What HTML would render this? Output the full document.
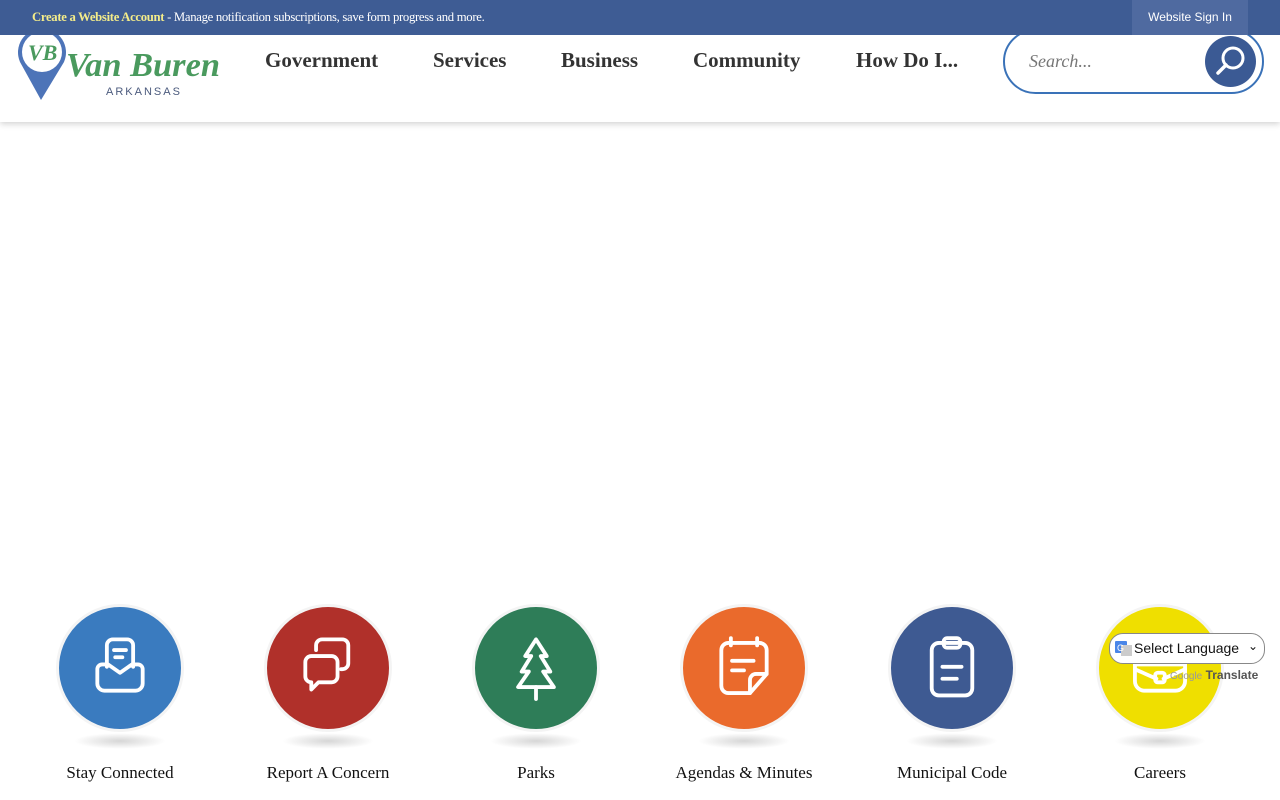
<!DOCTYPE html>
<html><head><style>
*{margin:0;padding:0;box-sizing:border-box}
body{width:1280px;height:800px;background:#fff;position:relative;overflow:hidden;font-family:"Liberation Serif",serif}
.top{position:absolute;left:0;top:0;width:1280px;height:35px;background:#3e5c94;z-index:3}
.top .msg{position:absolute;left:32px;top:10px;font-size:12.7px;color:#fff;letter-spacing:-0.3px}
.top .msg b{color:#f4ec8a}
.top .sign{position:absolute;left:1132px;top:0;width:116px;height:35px;background:#4f6aa0;color:#fff;font-family:"Liberation Sans",sans-serif;font-size:12px;text-align:center;line-height:35px}
.hdr{position:absolute;left:0;top:0;width:1280px;height:122px;background:#fff;box-shadow:0 2px 6px rgba(0,0,0,.18);z-index:2}
.nav{position:absolute;top:48px;font-size:21px;font-weight:bold;color:#333}
.search{position:absolute;left:1003px;top:29px;width:261px;height:65px;border:2px solid #3a72b8;border-radius:33px;z-index:2}
.search span{position:absolute;left:24px;top:20px;font-style:italic;color:#777;font-size:18px}
.sbtn{position:absolute;left:1205px;top:36px;width:51px;height:51px;border-radius:50%;background:#3b5a94;z-index:3}
.item{position:absolute;top:604px;width:200px;text-align:center}
.circ{width:128px;height:128px;margin:0 auto;border-radius:50%;border:3px solid #f4f4f4;position:relative}
.circ svg{position:absolute;left:24px;top:24px}
.shadow{width:92px;height:16px;margin:1px auto 0;border-radius:50%;background:radial-gradient(ellipse,rgba(0,0,0,.16),rgba(0,0,0,0) 70%)}
.lbl{margin-top:14px;font-size:17px;color:#111}
.gt{position:absolute;left:1109px;top:633px;width:156px;height:31px;border:1px solid #888;border-radius:14px;background:#fff;font-family:"Liberation Sans",sans-serif;font-size:14px;color:#111;z-index:4}
.gt2{position:absolute;left:1170px;top:668px;font-family:"Liberation Sans",sans-serif;font-size:12px;font-weight:bold;color:#555;z-index:4}
</style></head><body>
<div class="top"><div class="msg"><b>Create a Website Account</b> - Manage notification subscriptions, save form progress and more.</div><div class="sign">Website Sign In</div></div>
<div class="hdr">
<svg style="position:absolute;left:14px;top:22px" width="215" height="80" viewBox="0 0 215 80">
<path d="M27 78 L6 40 A24 24 0 1 1 50 40 Z" fill="#4d74b8"/>
<circle cx="28" cy="30" r="20" fill="#fff"/>
<text x="14" y="38" font-family="Liberation Serif" font-style="italic" font-weight="bold" font-size="22" fill="#4a9a5e">VB</text>
<text x="52" y="54" font-family="Liberation Serif" font-style="italic" font-weight="bold" font-size="34" fill="#4a9a5e" textLength="154" lengthAdjust="spacingAndGlyphs">Van Buren</text>
<text x="92" y="73" font-family="Liberation Sans" font-size="11" letter-spacing="2" fill="#4b5a7d">ARKANSAS</text>
</svg>
<div class="nav" style="left:265px">Government</div>
<div class="nav" style="left:433px">Services</div>
<div class="nav" style="left:561px">Business</div>
<div class="nav" style="left:693px">Community</div>
<div class="nav" style="left:856px">How Do I...</div>
</div>
<div class="search"><span>Search...</span></div>
<div class="sbtn"><svg width="51" height="51" viewBox="0 0 51 51"><circle cx="28" cy="22" r="10" fill="none" stroke="#fff" stroke-width="3"/><path d="M21 29 L13 37" stroke="#fff" stroke-width="3.5" stroke-linecap="round"/></svg></div>

<div class="item" style="left:20px"><div class="circ" style="background:#3a7bbf"><svg width="74" height="74" viewBox="0 0 62 62" fill="none" stroke="#fff" stroke-width="3.2" stroke-linecap="round" stroke-linejoin="round"><path d="M20 30 V12 a5 5 0 0 1 5-5 h12 a5 5 0 0 1 5 5 V30"/><path d="M26 16h10M27 22h6"/><path d="M12 32 a4 4 0 0 1 4-4 h5 l10 7 l10-7 h5 a4 4 0 0 1 4 4 v12 a6 6 0 0 1-6 6 H18 a6 6 0 0 1-6-6z"/></svg></div><div class="shadow"></div><div class="lbl">Stay Connected</div></div>
<div class="item" style="left:228px"><div class="circ" style="background:#b0302a"><svg width="74" height="74" viewBox="0 0 62 62" fill="none" stroke="#fff" stroke-width="3.2" stroke-linecap="round" stroke-linejoin="round"><path d="M21 16 V12 a5 5 0 0 1 5-5 h17 a5 5 0 0 1 5 5 v15 a5 5 0 0 1-5 5 h-1"/><path d="M12 26 a5 5 0 0 1 5-5 h17 a5 5 0 0 1 5 5 v12 a5 5 0 0 1-5 5 H23 l-6 6 v-6 a5 5 0 0 1-5-5z"/></svg></div><div class="shadow"></div><div class="lbl">Report A Concern</div></div>
<div class="item" style="left:436px"><div class="circ" style="background:#2e7d58"><svg width="74" height="74" viewBox="0 0 62 62" fill="none" stroke="#fff" stroke-width="3.2" stroke-linecap="round" stroke-linejoin="round"><path d="M31 7 L22 21 h5 l-8 13 h6 l-9 13 h30 l-9-13 h6 l-8-13 h5z"/><path d="M31 47 v10"/></svg></div><div class="shadow"></div><div class="lbl">Parks</div></div>
<div class="item" style="left:644px"><div class="circ" style="background:#ea6a2c"><svg width="74" height="74" viewBox="0 0 62 62" fill="none" stroke="#fff" stroke-width="3.2" stroke-linecap="round" stroke-linejoin="round"><path d="M20 6v6M42 6v6"/><path d="M50 36 V16 a6 6 0 0 0-6-6 H18 a6 6 0 0 0-6 6 v30 a6 6 0 0 0 6 6 h18 z"/><path d="M50 36 h-9 a5 5 0 0 0-5 5 v11"/><path d="M21 25h18M21 33h10"/></svg></div><div class="shadow"></div><div class="lbl">Agendas &amp; Minutes</div></div>
<div class="item" style="left:852px"><div class="circ" style="background:#3e5a92"><svg width="74" height="74" viewBox="0 0 62 62" fill="none" stroke="#fff" stroke-width="3.2" stroke-linecap="round" stroke-linejoin="round"><rect x="14" y="10" width="34" height="44" rx="6"/><rect x="24" y="6" width="14" height="8" rx="3"/><path d="M23 30h16M23 40h12"/></svg></div><div class="shadow"></div><div class="lbl">Municipal Code</div></div>
<div class="item" style="left:1060px"><div class="circ" style="background:#efdf00"><svg width="74" height="74" viewBox="0 0 62 62" fill="none" stroke="#fff" stroke-width="3.2" stroke-linecap="round" stroke-linejoin="round"><path d="M10 28 h42 v14 a8 8 0 0 1-8 8 H18 a8 8 0 0 1-8-8z"/><path d="M10 32 l18 8 M52 32 l-18 8"/><rect x="27" y="35" width="8" height="8" rx="2"/></svg></div><div class="shadow"></div><div class="lbl">Careers</div></div>

<div class="gt"><svg style="position:absolute;left:5px;top:7px" width="18" height="16"><rect width="12" height="12" fill="#4a86e8" rx="1"/><rect x="6" y="4" width="11" height="11" fill="#ccc"/><text x="2" y="10" font-size="9" fill="#fff" font-family="Liberation Sans">G</text></svg><span style="position:absolute;left:24px;top:6px">Select Language</span><span style="position:absolute;right:6px;top:5px;font-size:12px">&#8964;</span></div>
<div class="gt2"><span style="color:#999;font-weight:normal;font-size:10px">Google</span> Translate</div>
</body></html>
